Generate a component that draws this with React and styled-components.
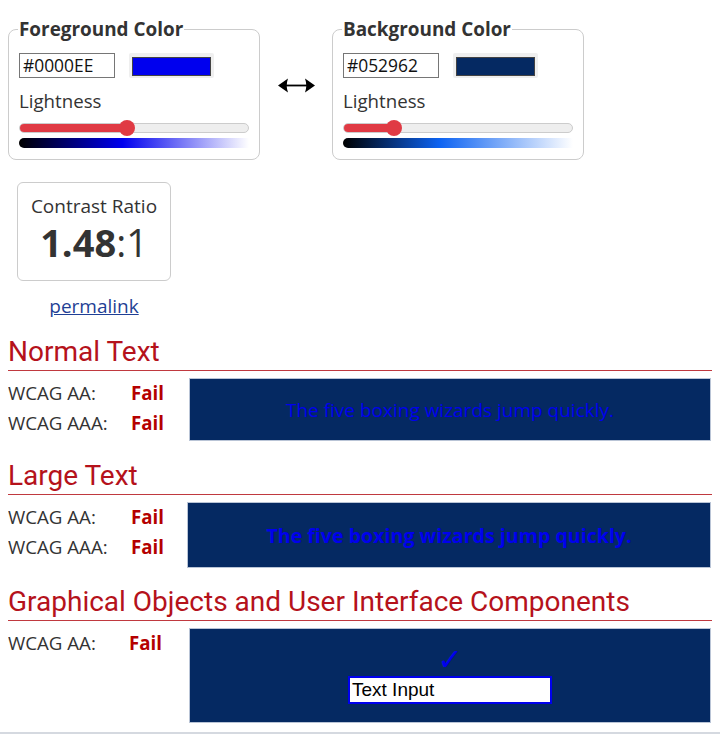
import React from "react";
import styled, { createGlobalStyle } from "styled-components";

const Global = createGlobalStyle`
  html, body { margin: 0; padding: 0; background: #fff; }
  body { margin: 8px; font-family: "Open Sans", "Liberation Sans", sans-serif; color: #333; }
  * { box-sizing: border-box; }
`;

const Page = styled.div`
  display: flex;
  flex-direction: column;
`;

const TopRow = styled.div`
  display: flex;
  align-items: flex-start;
  padding-top: 8px;
`;

const Field = styled.fieldset`
  margin: 0;
  width: 252px;
  border: 1px solid #ccc;
  border-radius: 8px;
  padding: 0 10px 11px;
  min-width: 0;
`;

const Legend = styled.legend`
  padding: 0 1px;
  margin-left: -1px;
  font-size: 18.9px;
  font-weight: 700;
  line-height: 26px;
  color: #333;
`;

const InputRow = styled.div`
  display: flex;
  align-items: center;
  gap: 14px;
  margin-top: 11px;
`;

const Hex = styled.div`
  width: 96px;
  height: 25px;
  border: 1px solid #767676;
  font-size: 17.4px;
  line-height: 23px;
  padding-left: 3px;
  color: #111;
`;

const Swatch = styled.div`
  width: 85px;
  height: 25px;
  background: #efefef;
  padding: 4px 3px 4px 3px;
  border-radius: 2px;
  &::after {
    content: "";
    display: block;
    height: 100%;
    background: ${(p) => p.$color};
    border: 1px solid #444;
  }
`;

const Label = styled.div`
  font-size: 18.7px;
  line-height: 24px;
  margin-top: 11px;
  color: #333;
`;

const Track = styled.div`
  position: relative;
  height: 10px;
  margin-top: 10px;
  border-radius: 5px;
  background: #eee;
  border: 1px solid #ccc;
`;

const Fill = styled.div`
  height: 100%;
  border-radius: 5px 0 0 5px;
  background: #e03a44;
`;

const Thumb = styled.div`
  position: absolute;
  top: 50%;
  width: 16px;
  height: 16px;
  margin: -8px 0 0 -8px;
  border-radius: 50%;
  background: #e03a44;
`;

const Gradient = styled.div`
  height: 10px;
  margin-top: 5px;
  border-radius: 5px 0 0 5px;
  background: linear-gradient(to right, #000, ${(p) => p.$mid} ${(p) => p.$at}%, #fff);
`;

const Swap = styled.div`
  width: 72px;
  align-self: center;
  display: flex;
  justify-content: center;
  margin-top: -6px;
  padding-left: 1px;
`;

const RatioWrap = styled.div`
  margin: 22px 0 0 9px;
  width: 154px;
  display: flex;
  flex-direction: column;
  align-items: center;
`;

const RatioBox = styled.div`
  width: 154px;
  height: 99px;
  border: 1px solid #ccc;
  border-radius: 6px;
  display: flex;
  flex-direction: column;
  align-items: center;
  padding-top: 10px;
`;

const RatioTitle = styled.div`
  font-size: 19px;
  line-height: 26px;
  color: #333;
`;

const RatioValue = styled.div`
  font-size: 38px;
  line-height: 46px;
  color: #333;
  b { font-weight: 700; }
`;

const Permalink = styled.a`
  margin-top: 12px;
  font-size: 19px;
  line-height: 26px;
  color: #1f3f95;
  text-decoration: underline;
`;

const Heading = styled.h2`
  margin: ${(p) => p.$mt}px 0 0;
  font-family: Roboto, "Liberation Sans", sans-serif;
  font-weight: 400;
  font-size: 28px;
  line-height: 36px;
  color: #b5121b;
  border-bottom: 1px solid #c0393f;
  padding-bottom: 0;
`;

const Section = styled.div`
  display: flex;
  align-items: flex-start;
  margin-top: 7px;
`;

const Results = styled.div`
  width: ${(p) => p.$w}px;
  flex: none;
  display: flex;
  flex-direction: column;
`;

const ResultRow = styled.div`
  display: flex;
  font-size: 18.7px;
  line-height: 30px;
  color: #333;
`;

const ResultName = styled.span`
  width: ${(p) => p.$w}px;
`;

const Verdict = styled.span`
  font-weight: 700;
  color: #b50000;
`;

const Sample = styled.div`
  flex: 1;
  height: ${(p) => p.$h}px;
  background: #052962;
  border: 1px solid #b9c4d6;
  display: flex;
  flex-direction: column;
  align-items: center;
  justify-content: ${(p) => (p.$top ? "flex-start" : "center")};
  padding-top: ${(p) => (p.$top ? 17 : 0)}px;
  color: #0000ee;
  font-size: ${(p) => p.$fs}px;
  font-weight: ${(p) => p.$fw};
  margin-right: 1px;
`;

const Check = styled.div`
  font-family: "DejaVu Sans", sans-serif;
  font-size: 30px;
  line-height: 27px;
  color: #0000ee;
`;

const TextInput = styled.div`
  width: 204px;
  height: 28px;
  margin-top: 3px;
  background: #fff;
  border: 2px solid #0000ee;
  font-family: "Liberation Sans", Arial, sans-serif;
  font-size: 19px;
  line-height: 24px;
  color: #000;
  font-weight: 400;
  padding-left: 2px;
`;

const BottomRule = styled.div`
  position: fixed;
  left: 0;
  right: 0;
  bottom: 0;
  height: 2px;
  background: #d5d9e0;
`;

function SwapArrow() {
  return (
    <svg width="37" height="17" viewBox="0 0 37 17" aria-label="swap">
      <line x1="6" y1="8.5" x2="31" y2="8.5" stroke="#000" strokeWidth="1.8" />
      <path d="M0 8.5 L10 1.5 Q7.5 8.5 10 15.5 Z" fill="#000" />
      <path d="M37 8.5 L27 1.5 Q29.5 8.5 27 15.5 Z" fill="#000" />
    </svg>
  );
}

function ColorField({ title, hex, color, pos, mid, at }) {
  return (
    <Field>
      <Legend>{title}</Legend>
      <InputRow>
        <Hex>{hex}</Hex>
        <Swatch $color={color} />
      </InputRow>
      <Label>Lightness</Label>
      <Track>
        <Fill style={{ width: `${pos}%` }} />
        <Thumb style={{ left: `${pos}%` }} />
      </Track>
      <Gradient $mid={mid} $at={at} />
    </Field>
  );
}

function ResultList({ rows, nameW, w }) {
  return (
    <Results $w={w}>
      {rows.map((r) => (
        <ResultRow key={r}>
          <ResultName $w={nameW}>{r}:</ResultName>
          <Verdict>Fail</Verdict>
        </ResultRow>
      ))}
    </Results>
  );
}

export default function App() {
  return (
    <Page>
      <Global />
      <TopRow>
        <ColorField title="Foreground Color" hex="#0000EE" color="#0000ee" pos={47} mid="#0000ee" at={45} />
        <Swap><SwapArrow /></Swap>
        <ColorField title="Background Color" hex="#052962" color="#052962" pos={22} mid="#0d63f2" at={42} />
      </TopRow>
      <RatioWrap>
        <RatioBox>
          <RatioTitle>Contrast Ratio</RatioTitle>
          <RatioValue><b>1.48</b>:1</RatioValue>
        </RatioBox>
        <Permalink href="#">permalink</Permalink>
      </RatioWrap>

      <Heading $mt={15}>Normal Text</Heading>
      <Section>
        <ResultList rows={["WCAG AA", "WCAG AAA"]} nameW={123} w={181} />
        <Sample $h={63} $fs={19} $fw={400}>The five boxing wizards jump quickly.</Sample>
      </Section>

      <Heading $mt={17}>Large Text</Heading>
      <Section>
        <ResultList rows={["WCAG AA", "WCAG AAA"]} nameW={123} w={179} />
        <Sample $h={66} $fs={19.6} $fw={700}>The five boxing wizards jump quickly.</Sample>
      </Section>

      <Heading $mt={16}>Graphical Objects and User Interface Components</Heading>
      <Section>
        <ResultList rows={["WCAG AA"]} nameW={121} w={181} />
        <Sample $h={95} $fs={19} $fw={400} $top>
          <Check>✓</Check>
          <TextInput>Text Input</TextInput>
        </Sample>
      </Section>
      <BottomRule />
    </Page>
  );
}
